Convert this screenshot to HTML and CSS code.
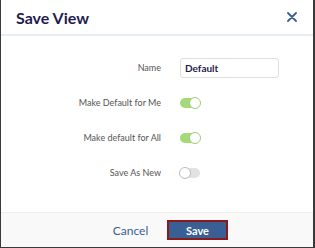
FILE: index.html
```html
<!DOCTYPE html>
<html lang="en">
<head>
    <meta charset="UTF-8">
    <meta name="viewport" content="width=device-width, initial-scale=1.0">
    <title>Save View</title>
    <link rel="stylesheet" href="styles.css">
</head>
<body>
    <div class="modal">
        <div class="modal-header">
            <h2 class="modal-title">Save View</h2>
            <button class="close-button" aria-label="Close">
                <svg width="10" height="10" viewBox="0 0 10 10">
                    <path d="M1 1 L9 9 M9 1 L1 9" stroke="#3a5f94" stroke-width="1.8" stroke-linecap="round"/>
                </svg>
            </button>
        </div>
        <div class="modal-body">
            <div class="form-row">
                <label class="form-label" for="viewName">Name</label>
                <input type="text" id="viewName" class="name-input" value="Default">
            </div>
            <div class="form-row">
                <span class="form-label">Make Default for Me</span>
                <span class="toggle on"><span class="knob"></span></span>
            </div>
            <div class="form-row">
                <span class="form-label">Make default for All</span>
                <span class="toggle on"><span class="knob"></span></span>
            </div>
            <div class="form-row">
                <span class="form-label">Save As New</span>
                <span class="toggle"><span class="knob"></span></span>
            </div>
        </div>
        <div class="modal-footer">
            <button class="btn btn-cancel">Cancel</button>
            <button class="btn btn-save">Save</button>
        </div>
    </div>
</body>
</html>
```

FILE: styles.css
```css
body {
    margin: 0;
    padding: 0;
    font-family: 'Lato', sans-serif;
    background-color: #fff;
}
.modal {
    width: 315px;
    height: 248px;
    box-sizing: border-box;
    border: 1px solid #3a3a3a;
    border-top: none;
    border-right-width: 2px;
    display: flex;
    flex-direction: column;
    background-color: #fff;
}
.modal-header {
    height: 34px;
    border-bottom: 2px solid #e6eef6;
    display: flex;
    align-items: center;
    justify-content: space-between;
    padding: 0 16px 0 15px;
}
.modal-title {
    margin: 0;
    font-size: 16px;
    font-weight: 700;
    color: #1f1c4d;
}
.close-button {
    border: none;
    background: none;
    padding: 0;
    width: 10px;
    height: 10px;
    display: flex;
    cursor: pointer;
}
.modal-body {
    flex-grow: 1;
    padding-top: 14px;
}
.form-row {
    display: grid;
    grid-template-columns: 160px 1fr;
    column-gap: 19px;
    align-items: center;
    height: 35px;
}
.form-label {
    text-align: right;
    font-size: 9px;
    color: #555;
}
.name-input {
    width: 99px;
    height: 20px;
    box-sizing: border-box;
    border: 1px solid #ddd;
    border-radius: 3px;
    padding: 0 4px;
    font-family: 'Lato', sans-serif;
    font-size: 10px;
    font-weight: 700;
    color: #1f1c4d;
}
.toggle {
    position: relative;
    width: 20px;
    height: 10px;
    border-radius: 5px;
    background-color: #e2e2e2;
}
.toggle.on {
    background-color: #a5d97a;
}
.knob {
    position: absolute;
    top: -1px;
    left: -1px;
    width: 12px;
    height: 12px;
    box-sizing: border-box;
    border-radius: 50%;
    background-color: #fff;
    border: 1px solid #bbb;
}
.toggle.on .knob {
    left: auto;
    right: -1px;
    border-color: #9ccf70;
}
.modal-footer {
    height: 34px;
    border-top: 1px solid #eee;
    background-color: #f9f9f9;
    display: flex;
    align-items: center;
    justify-content: center;
    gap: 6px;
    padding-left: 14px;
}
.btn {
    width: 61px;
    height: 20px;
    font-family: 'Lato', sans-serif;
    font-size: 11px;
    font-weight: 700;
    cursor: pointer;
    padding: 0;
}
.btn-cancel {
    border: none;
    background: none;
    color: #3a5f94;
    font-size: 12px;
    font-weight: 400;
}
.btn-save {
    background-color: #3a5f94;
    color: #fff;
    border: 2px solid #8b1a1a;
}
```
